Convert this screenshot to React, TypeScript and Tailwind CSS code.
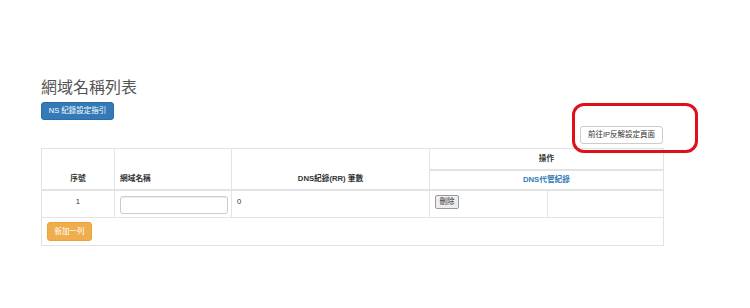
export default function App() {
  return (
    <div className="h-[308px] w-[750px] bg-white font-['Liberation_Sans','Noto_Sans_CJK_TC',sans-serif] text-[#333]">
      <div className="ml-[41px] w-[622px] pt-[77px]">
        <h1 className="text-[16px] leading-[21px] text-[#555]">網域名稱列表</h1>
        <button className="mt-[4px] block h-[18px] w-[73px] rounded-[3px] border border-[#2e6da4] bg-[#337ab7] text-[7.5px] leading-none text-white">
          NS 紀錄設定指引
        </button>
        <div className="mt-[6px] flex justify-end">
          <div className="relative">
            <button className="block h-[18px] w-[83px] rounded-[3px] border border-[#ccc] bg-white text-[7.5px] leading-none text-[#333]">
              前往IP反解設定頁面
            </button>
            <div className="pointer-events-none absolute -top-[23px] -right-[35px] -bottom-[9px] -left-[8px] rounded-[12px] border-[3px] border-[#e0101a]" />
          </div>
        </div>
        <table className="mt-[4px] w-[622px] table-fixed border-collapse text-[7.7px]">
          <colgroup>
            <col className="w-[73px]" />
            <col className="w-[117px]" />
            <col className="w-[198px]" />
            <col className="w-[118px]" />
            <col className="w-[116px]" />
          </colgroup>
          <thead>
            <tr className="h-[21px]">
              <th rowSpan={2} className="border border-b-2 border-[#e3e3e3] px-[5px] pb-[4px] text-center align-bottom font-bold">序號</th>
              <th rowSpan={2} className="border border-b-2 border-[#e3e3e3] px-[5px] pb-[4px] text-left align-bottom font-bold">網域名稱</th>
              <th rowSpan={2} className="border border-b-2 border-[#e3e3e3] px-[5px] pb-[4px] text-center align-bottom font-bold">DNS紀錄(RR) 筆數</th>
              <th colSpan={2} className="border border-b-2 border-[#e3e3e3] px-[5px] text-center align-middle font-bold">操作</th>
            </tr>
            <tr className="h-[20px]">
              <th colSpan={2} className="border border-b-2 border-[#e3e3e3] px-[5px] text-center align-middle font-bold text-[#337ab7]">DNS代管紀錄</th>
            </tr>
          </thead>
          <tbody>
            <tr className="h-[28px]">
              <td className="border border-[#e3e3e3] px-[5px] pt-[5px] text-center align-top">1</td>
              <td className="border border-[#e3e3e3] px-[5px] pt-[5px] align-top">
                <input className="block h-[18px] w-[108px] rounded-[3px] border border-[#ccc] bg-white shadow-[inset_0_1px_1px_rgba(0,0,0,0.075)]" />
              </td>
              <td className="border border-[#e3e3e3] px-[5px] pt-[5px] align-top">0</td>
              <td className="border border-[#e3e3e3] px-[5px] pt-[4px] align-top">
                <button className="block h-[14px] w-[24px] rounded-[2px] border border-[#999] bg-[#eee] text-[7.5px] leading-none text-[#333]">刪除</button>
              </td>
              <td className="border border-[#e3e3e3] px-[5px] align-top" />
            </tr>
            <tr className="h-[28px]">
              <td colSpan={5} className="border border-[#e3e3e3] px-[5px] align-middle">
                <button className="block h-[19px] w-[45px] rounded-[3px] border border-[#eea236] bg-[#f0ad4e] text-[7.5px] leading-none text-white">新加一列</button>
              </td>
            </tr>
          </tbody>
        </table>
      </div>
    </div>
  )
}
